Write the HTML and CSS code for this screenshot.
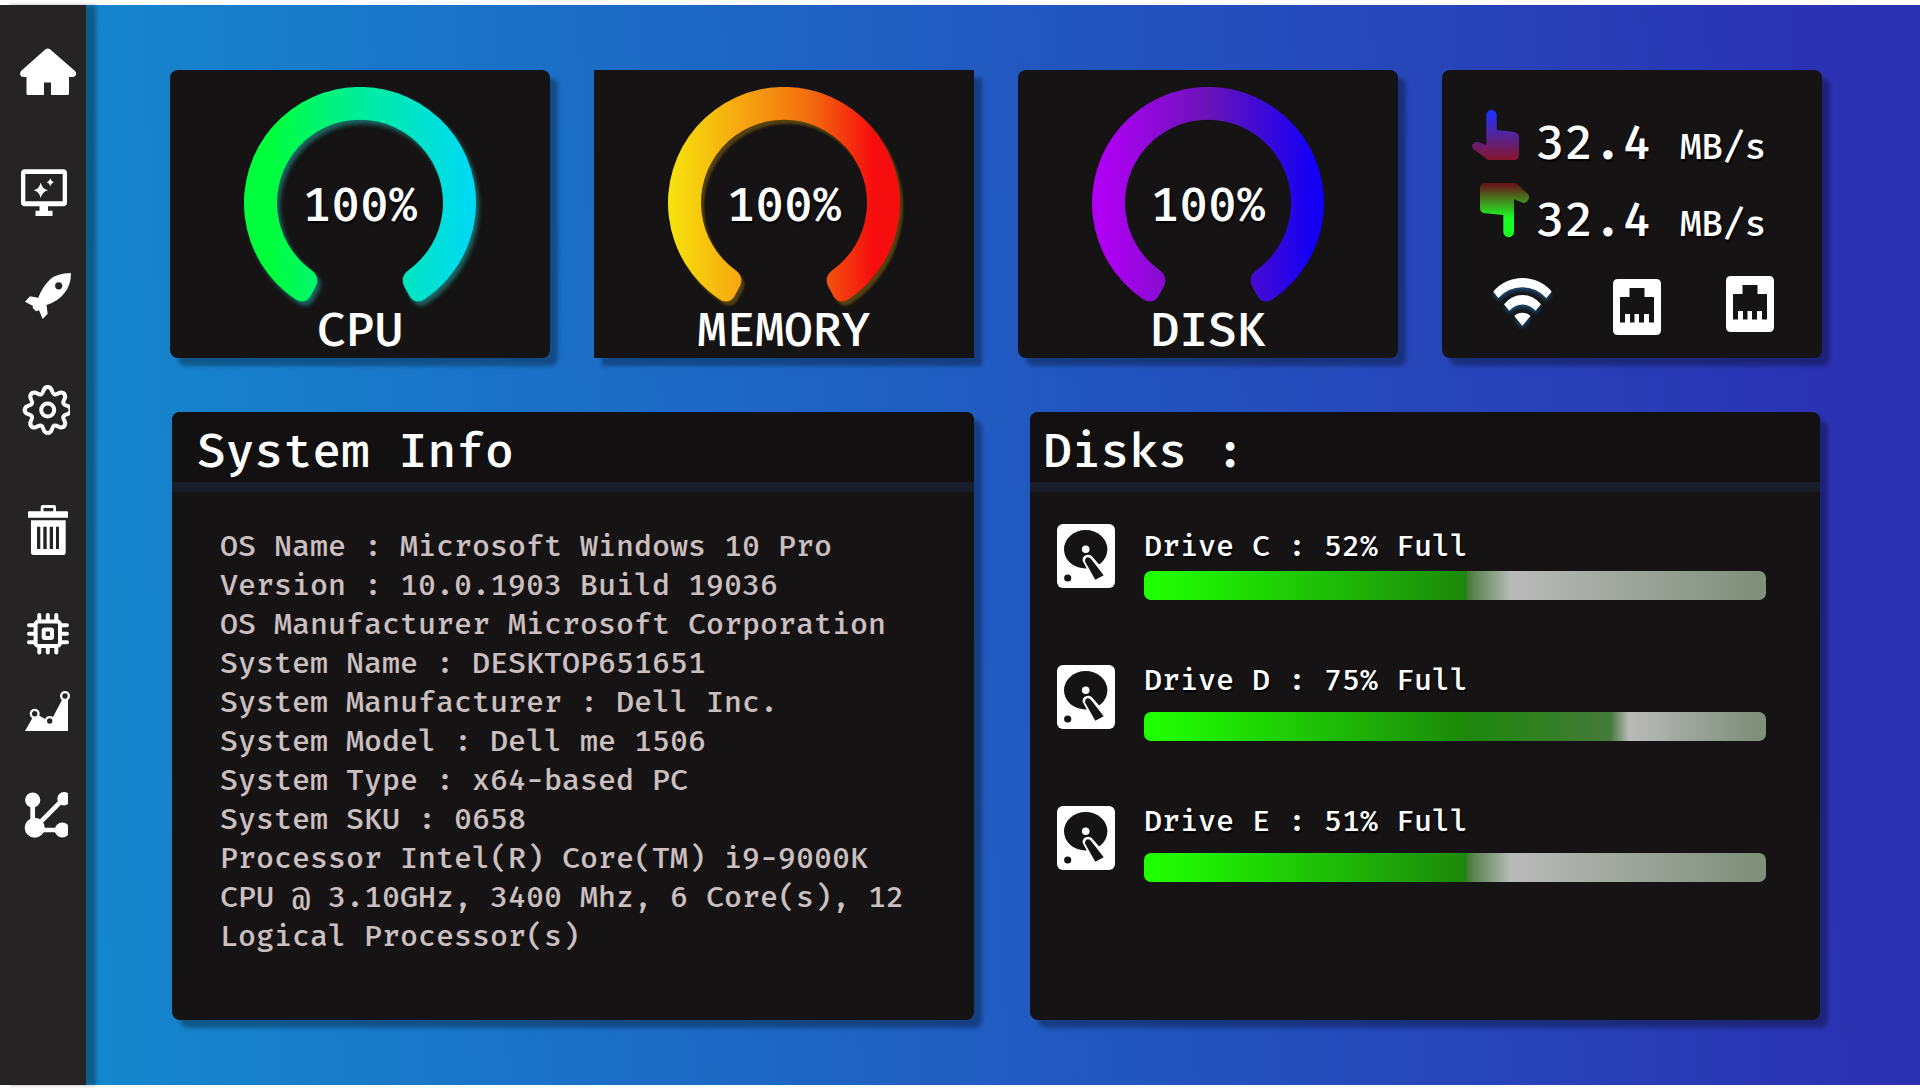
FILE: index.html
```html
<!DOCTYPE html>
<html lang="en">
<head>
<meta charset="utf-8">
<meta name="viewport" content="width=device-width, initial-scale=1">
<title>System Monitor</title>
<link rel="stylesheet" href="styles.css">
</head>
<body>
<svg class="defs" width="0" height="0" aria-hidden="true">
  <defs>
    <linearGradient id="grad-cpu" x1="0" y1="0" x2="1" y2="0">
      <stop offset=".12" stop-color="#00ff3c"/><stop offset=".5" stop-color="#00ee9c"/><stop offset="1" stop-color="#00d8f8"/>
    </linearGradient>
    <linearGradient id="grad-memory" x1="0" y1="0" x2="1" y2="0">
      <stop offset="0" stop-color="#f7e40c"/><stop offset=".4" stop-color="#f59611"/><stop offset=".62" stop-color="#f26b0e"/><stop offset=".88" stop-color="#f60e0e"/>
    </linearGradient>
    <linearGradient id="grad-disk" x1="0" y1="0" x2="1" y2="0">
      <stop offset=".05" stop-color="#b000f4"/><stop offset=".5" stop-color="#6a14b8"/><stop offset=".95" stop-color="#1400f4"/>
    </linearGradient>
    <linearGradient id="grad-up" x1="0" y1="0" x2="0" y2="1">
      <stop offset=".05" stop-color="#2030ff"/><stop offset=".5" stop-color="#56249a"/><stop offset="1" stop-color="#86142c"/>
    </linearGradient>
    <linearGradient id="grad-down" x1="0" y1="0" x2="0" y2="1">
      <stop offset=".03" stop-color="#661616"/><stop offset=".6" stop-color="#22ee24"/><stop offset=".68" stop-color="#18ff24"/>
    </linearGradient>
    <path id="arc" d="M-65 96A116 116 0 1 1 65 96Q56 102 50 94L44 83Q40 74 48 67.500A83 83 0 1 0-48 67.500Q-40 74-44 83L-50 94Q-56 102-65 96Z"/>
    <path id="tooth" d="M0-23C5.500-23 3.300-17 6.500-15.700S12.400-20.200 16.300-16.300"/>
    <clipPath id="clip-icon"><path d="M0 0H50V50H0Z"/></clipPath>
    <clipPath id="clip-gear"><path d="M0-5H52V55H0Z"/></clipPath>
    <symbol id="ethernet" viewBox="0 0 48 56">
      <path fill="#fff" fill-rule="evenodd" d="M5 0H43Q48 0 48 5V51Q48 56 43 56H5Q0 56 0 51V5Q0 0 5 0ZM16.500 9V18H7V43.500H12V35H17V43.500H21.500V35H26V43.500H31V35H36V43.500H41V18H31.500V9Z"/>
    </symbol>
    <symbol id="hdd" viewBox="0 0 58 64">
      <rect width="58" height="64" rx="6" fill="#fff"/>
      <ellipse cx="28.700" cy="25.300" rx="21.700" ry="19.200" fill="#151314"/>
      <circle cx="28.700" cy="25.300" r="3.800" fill="#fff"/>
      <path d="M25.500 36.500Q25.500 31 31.500 30.800Q34.500 31 36 33.500L43 41.500L51 52L38 60Z" fill="#fff"/>
      <path d="M28 37.500Q28 33.500 31 33.300Q33 33.300 34.500 35.500L46.700 51.300L38.300 55.700Z" fill="#151314"/>
      <circle cx="10.700" cy="54" r="3.600" fill="#151314"/>
    </symbol>
  </defs>
</svg>

<div class="app">
  <nav class="sidebar" aria-label="Main">
    <a href="#home" aria-label="Home"><svg viewBox="0 0 60 50"><path d="M27.500 2.300Q29.700.500 32 2.300L57 24Q59 26.500 57.500 28.500Q56.500 30 54 30H51V46.500Q51 48 49.500 48H33V35.500H26V48H10Q8.500 48 8.500 46.500V30H5.500Q3 30 2.300 28Q1.500 26 3 24Z"/></svg></a>
    <a class="wide" href="#display" aria-label="Display"><svg viewBox="0 0 60 50"><path fill-rule="evenodd" d="M7 2.300H45Q49 2.300 49 6.300V35.500Q49 39.300 45 39.300H30V43.700H34.500V49H17.500V43.700H21.500V39.300H7Q3 39.300 3 35.500V6.300Q3 2.300 7 2.300ZM7.300 7V34.300H44.700V7Z"/><path d="M22.700 15.500Q24 22 30 23.300Q24 25 22.700 31Q21.400 25 15.700 23.300Q21.400 22 22.700 15.500ZM32.300 11Q33 14.600 36.300 15.300Q33 16 32.300 19.500Q31.600 16 28.300 15.300Q31.600 14.600 32.300 11Z"/></svg></a>
    <a href="#boost" aria-label="Boost"><svg viewBox="0 0 60 50"><path fill-rule="evenodd" d="M53 2Q39 2 32 8.500Q24 16.500 20.300 26.700L12 25.300L7 30.700L15 35L14.700 37L18 40.300L21 39.300L24.700 48L29.700 42.700L28.500 34Q40 30.500 46.500 22Q53 14 53 2ZM40.700 11.200A3.600 3.600 0 1 0 40.700 18.400A3.600 3.600 0 1 0 40.700 11.200Z"/></svg></a>
    <a class="roomy" href="#settings" aria-label="Settings"><svg viewBox="0 0 60 50"><g clip-path="url(#clip-gear)"><g transform="translate(29.700 25)" fill="none" stroke="#fff" stroke-width="4" stroke-linecap="round"><use href="#tooth"/><use href="#tooth" transform="rotate(45)"/><use href="#tooth" transform="rotate(90)"/><use href="#tooth" transform="rotate(135)"/><use href="#tooth" transform="rotate(180)"/><use href="#tooth" transform="rotate(225)"/><use href="#tooth" transform="rotate(270)"/><use href="#tooth" transform="rotate(315)"/><circle r="6.500"/></g></g></svg></a>
    <a class="wide" href="#trash" aria-label="Trash"><svg viewBox="0 0 60 50"><path fill-rule="evenodd" d="M25 0H36Q38 0 38 2V6.300H49Q50 6.300 50 7.500V12.700H10V7.500Q10 6.300 11 6.300H22.700V2Q22.700 0 25 0ZM25.500 3V6.300H35.300V3ZM13 15.300H47.700V47.500Q47.700 50 45.500 50H15.500Q13 50 13 47.500ZM19 21.700V44H22.300V21.700ZM25.300 21.700V44H28.700V21.700ZM31.700 21.700V44H35V21.700ZM38 21.700V44H41V21.700Z"/></svg></a>
    <a href="#processor" aria-label="Processor"><svg viewBox="0 0 60 50"><g fill="none" stroke="#fff" stroke-width="4"><rect x="17.600" y="12.600" width="24.400" height="24.400" rx="3"/><rect x="25.700" y="20.600" width="8.300" height="8.300" rx="1"/><path stroke-linecap="round" d="M21.300 6V11M29.800 6V11M38.300 6V11M21.300 38.500V43.500M29.800 38.500V43.500M38.300 38.500V43.500M11 16.300H16M11 24.800H16M11 33.300H16M43.500 16.300H49M43.500 24.800H49M43.500 33.300H49"/></g></svg></a>
    <a class="tight" href="#statistics" aria-label="Statistics"><svg viewBox="0 0 60 50"><path d="M7 45L15 31L20 29L29 34L35 31L44.500 13H50V45Z"/><circle cx="16.700" cy="27.700" r="5"/><circle cx="31.700" cy="35" r="5"/><circle cx="47" cy="10" r="5"/><g fill="#252324"><circle cx="16.700" cy="27.700" r="2.700"/><circle cx="31.700" cy="35" r="2.700"/><circle cx="47" cy="10" r="2.700"/></g></svg></a>
    <a href="#network" aria-label="Network"><svg viewBox="0 0 60 50"><g clip-path="url(#clip-icon)"><path d="M14.700 10V38M45.700 8.700L17 37.700M16.700 40H44" fill="none" stroke="#fff" stroke-width="4.700"/><circle cx="14.700" cy="10" r="7.600"/><circle cx="46" cy="8.700" r="6.700"/><circle cx="16.700" cy="37.700" r="10"/><circle cx="44.300" cy="40" r="7.600"/></g></svg></a>
  </nav>

  <main class="main">
    <section class="stats" aria-label="Usage">
      <article class="card">
        <div class="gauge gauge-cpu"><svg viewBox="-116 -116 232 232"><use href="#arc" fill="url(#grad-cpu)"/></svg><span>100%</span></div>
        <h2>CPU</h2>
      </article>
      <article class="card card-square">
        <div class="gauge gauge-memory"><svg viewBox="-116 -116 232 232"><use href="#arc" fill="url(#grad-memory)"/></svg><span>100%</span></div>
        <h2>MEMORY</h2>
      </article>
      <article class="card">
        <div class="gauge"><svg viewBox="-116 -116 232 232"><use href="#arc" fill="url(#grad-disk)"/></svg><span>100%</span></div>
        <h2>DISK</h2>
      </article>
      <article class="card network">
        <p class="rate"><svg viewBox="0 0 64 77" role="img" aria-label="Upload"><path fill="url(#grad-up)" d="M14.300 40V10.200A5.200 5.200 0 0 1 24.700 10.200V25L41 26.700Q47 27.500 47 33V50Q47 55 42 55H18Q16 55 14 53.500L2 44.500Q-1 42 .500 39.500Q3 36 6.500 37Z"/></svg><span>32.4 <small>MB/s</small></span></p>
        <p class="rate"><svg viewBox="0 0 64 77" role="img" aria-label="Download"><path fill="url(#grad-down)" d="M13 1H42Q44 1 46 3L56 12Q58 14.500 56.500 17.500Q54 22 50 20.500L42 17.300V49.800A5.300 5.300 0 0 1 31.300 49.800V33L13 31.300Q8 31 8 26V6Q8 1 13 1Z"/></svg><span>32.4 <small>MB/s</small></span></p>
        <div class="links">
          <svg class="wifi" viewBox="0 0 60 56" role="img" aria-label="Wi-Fi"><path d="M.300 15.700A38 38 0 0 1 58.700 15.700L53.300 22A32 32 0 0 0 5.300 22ZM11 28.300A23 23 0 0 1 48 28.300L42.500 34.700A17 17 0 0 0 16.300 34.700ZM21.300 40A12 12 0 0 1 37.500 40L29.300 49.700Z"/></svg>
          <svg class="port port-low" role="img" aria-label="Ethernet 1"><use href="#ethernet"/></svg>
          <svg class="port" role="img" aria-label="Ethernet 2"><use href="#ethernet"/></svg>
        </div>
      </article>
    </section>

    <div class="panels">
      <section class="panel">
        <h1>System Info</h1>
        <ul class="info">
          <li>OS Name : Microsoft Windows 10 Pro</li>
          <li>Version : 10.0.1903 Build 19036</li>
          <li>OS Manufacturer Microsoft Corporation</li>
          <li>System Name : DESKTOP651651</li>
          <li>System Manufacturer : Dell Inc.</li>
          <li>System Model : Dell me 1506</li>
          <li>System Type : x64-based PC</li>
          <li>System SKU : 0658</li>
          <li>Processor Intel(R) Core(TM) i9-9000K CPU @ 3.10GHz, 3400 Mhz, 6 Core(s), 12 Logical Processor(s)</li>
        </ul>
      </section>
      <section class="panel panel-disks">
        <h1>Disks :</h1>
        <div class="drives">
          <div class="drive"><svg aria-hidden="true"><use href="#hdd"/></svg><div class="usage"><label for="drive-c">Drive C : 52% Full</label><progress id="drive-c" max="100" value="52"></progress></div></div>
          <div class="drive drive-spaced"><svg aria-hidden="true"><use href="#hdd"/></svg><div class="usage"><label for="drive-d">Drive D : 75% Full</label><progress class="high" id="drive-d" max="100" value="75"></progress></div></div>
          <div class="drive drive-spaced"><svg aria-hidden="true"><use href="#hdd"/></svg><div class="usage"><label for="drive-e">Drive E : 51% Full</label><progress id="drive-e" max="100" value="51"></progress></div></div>
        </div>
      </section>
    </div>
  </main>
</div>
</body>
</html>
```
FILE: styles.css
```css
* {
  box-sizing: border-box;
}

body {
  margin: 0;
  background: #fff;
  color: #fff;
  font-family: "Fira Mono", "Fira Code", "DejaVu Sans Mono", monospace;
  font-weight: 500;
}

h1, h2, p, ul {
  margin: 0;
  padding: 0;
  font-weight: 500;
}

svg {
  display: block;
  flex: none;
}

.defs {
  position: absolute;
}

.app {
  display: flex;
  min-height: 100vh;
  padding: 5px 0;
}

/* Sidebar */
.sidebar {
  z-index: 1;
  flex: none;
  width: 86px;
  padding: 42px 0 42px 18px;
  background: #252324;
  box-shadow: 10px 0 4px rgba(0, 0, 0, .32);
}

.sidebar a {
  display: block;
  margin-top: 54px;
}

.sidebar a:first-child {
  margin-top: 0;
}

.sidebar a.wide {
  margin-top: 70px;
}

.sidebar a.roomy {
  margin-top: 64px;
}

.sidebar a.tight {
  margin-top: 27px;
}

.sidebar svg {
  width: 60px;
  height: 50px;
  fill: #fff;
  overflow: visible;
}

/* Content */
.main {
  flex: 1;
  display: flex;
  flex-direction: column;
  gap: 54px;
  padding: 65px 98px 65px 84px;
  background: linear-gradient(87deg, #1587cd 1%, #205ec2 46%, #2c30b2 97%);
}

.stats {
  display: grid;
  grid-template-columns: repeat(4, 1fr);
  gap: 44px;
}

.card,
.panel {
  background: #151314;
  border-radius: 8px;
  box-shadow: 8px 8px 4px rgba(0, 0, 0, .32);
}

.card {
  min-height: 288px;
  padding-top: 17px;
}

.card-square {
  border-radius: 0;
}

.gauge {
  display: grid;
  place-items: center;
}

.gauge svg,
.gauge span {
  grid-area: 1 / 1;
}

.gauge svg {
  width: 232px;
  height: 232px;
}

.gauge span,
.rate span {
  padding-top: 3px;
  font-size: 48px;
  line-height: 48px;
  text-shadow: 1px 2px 2px #000;
}

.gauge-cpu svg {
  filter: drop-shadow(3px 4px 2px rgba(36, 190, 175, .5));
}

.gauge-memory svg {
  filter: drop-shadow(3px 4px 1px rgba(150, 110, 10, .5));
}

.card h2 {
  margin-top: -13px;
  font-size: 48px;
  line-height: 48px;
  text-align: center;
}

/* Network card */
.network {
  padding: 35px 0 0 30px;
}

.rate {
  display: flex;
  align-items: center;
}

.rate svg {
  width: 64px;
  height: 77px;
}

.rate span {
  white-space: nowrap;
}

.rate small {
  font-size: 36px;
}

.links {
  display: flex;
  align-items: flex-start;
  gap: 60px;
  height: 59px;
  margin: 17px 0 0 21px;
}

.wifi {
  width: 60px;
  height: 56px;
  fill: #fff;
  overflow: visible;
  filter: drop-shadow(0 3px 2px rgba(30, 110, 170, .6));
}

.port {
  width: 48px;
  height: 56px;
}

.port-low {
  align-self: flex-end;
  margin-right: 5px;
}

/* Panels */
.panels {
  flex: 1;
  display: grid;
  grid-template-columns: 802fr 790fr;
  gap: 56px;
  margin: 0 2px;
}

.panel {
  overflow: hidden;
}

.panel h1 {
  height: 80px;
  padding-left: 25px;
  border-bottom: 10px solid #191c2a;
  background: #121011;
  font-size: 48px;
  line-height: 78px;
}

.panel-disks h1 {
  padding-left: 13px;
}

.info {
  padding: 35px 40px 34px 48px;
  color: #cbbfbf;
  font-size: 30px;
  line-height: 39px;
  list-style: none;
}

.drives {
  display: flex;
  flex-direction: column;
  gap: 57px;
  padding: 24px 54px 24px 27px;
}

.drive {
  display: flex;
  gap: 29px;
  min-height: 84px;
}

.drive svg {
  width: 58px;
  height: 64px;
  margin-top: 8px;
}

.usage {
  flex: 1;
  display: flex;
  flex-direction: column;
  justify-content: flex-end;
  gap: 5px;
}

.drive-spaced .usage {
  gap: 12px;
}

.usage label {
  font-size: 30px;
  line-height: 39px;
  text-shadow: 1px 2px 2px #000;
}

progress {
  display: block;
  width: 100%;
  height: 29px;
  border: 0;
  border-radius: 7px;
  overflow: hidden;
  appearance: none;
  background: linear-gradient(90deg, #20ff00 2%, #1c880a 52%, #4a7a3e 52%, #bababa 59%, #80907c 98%);
}

progress.high {
  background: linear-gradient(90deg, #20ff00 2%, #1c880a 52%, #457a3a 75%, #bababa 78%, #80907c 98%);
}

progress::-webkit-progress-bar,
progress::-webkit-progress-value {
  background: transparent;
}
```
